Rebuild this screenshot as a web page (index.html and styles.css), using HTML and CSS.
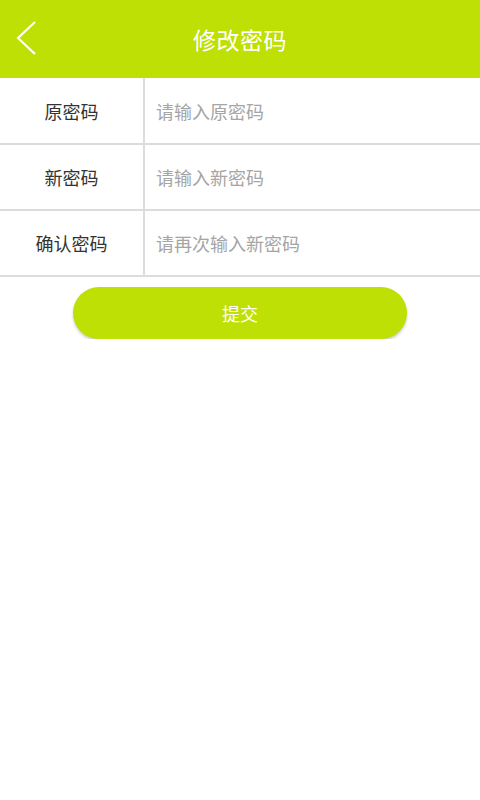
FILE: index.html
```html
<!DOCTYPE html>
<html>
<head>
	<meta charset="utf-8">
	<title>修改密码</title>
	<link rel="stylesheet" href="styles.css">
</head>
<body>
	<div class="topbar">
		<a class="back" href="#">
			<svg width="24" height="36" viewBox="0 0 24 36">
				<polyline points="19,1 2,17 19,33" fill="none" stroke="#fff" stroke-width="2.2"/>
			</svg>
		</a>
		<h1>修改密码</h1>
	</div>
	<form class="pwd-form">
		<label class="row first">
			<span class="name">原密码</span>
			<input type="password" placeholder="请输入原密码">
		</label>
		<label class="row">
			<span class="name">新密码</span>
			<input type="password" placeholder="请输入新密码">
		</label>
		<label class="row">
			<span class="name">确认密码</span>
			<input type="password" placeholder="请再次输入新密码">
		</label>
		<div class="actions">
			<button type="button" class="submit">提交</button>
		</div>
	</form>
</body>
</html>
```

FILE: styles.css
```css
body {
	margin: 0;
	background: #fff;
	font-family: "Noto Sans CJK SC", "Noto Sans", sans-serif;
}

.topbar {
	height: 78px;
	background-color: #bee004;
	display: flex;
	align-items: center;
	justify-content: center;
	position: relative;
}
.topbar h1 {
	margin: 0;
	color: #fff;
	font-size: 23px;
	font-weight: normal;
	letter-spacing: 0.5px;
}
.back {
	position: absolute;
	left: 16px;
	top: 21px;
	display: block;
	line-height: 0;
}

.row {
	display: flex;
	height: 64px;
	border-bottom: 2px solid #dcdcdc;
}
.row.first {
	height: 65px;
}
.row .name {
	width: 143px;
	border-right: 2px solid #dcdcdc;
	display: flex;
	align-items: center;
	justify-content: center;
	font-size: 18px;
	color: #333;
}
.row input {
	flex: 1;
	min-width: 0;
	border: none;
	outline: none;
	padding: 0 0 0 11px;
	font-family: inherit;
	font-size: 18px;
	color: #333;
	background: transparent;
}
.row input::placeholder {
	color: #a5a5a5;
}

.actions {
	display: flex;
	justify-content: center;
	padding-top: 10px;
}
.submit {
	width: 334px;
	height: 52px;
	border: none;
	border-radius: 26px;
	background-color: #bee004;
	color: #fff;
	font-family: inherit;
	font-size: 18px;
	box-shadow: 0 2px 3px rgba(0, 0, 0, 0.2);
}
```
